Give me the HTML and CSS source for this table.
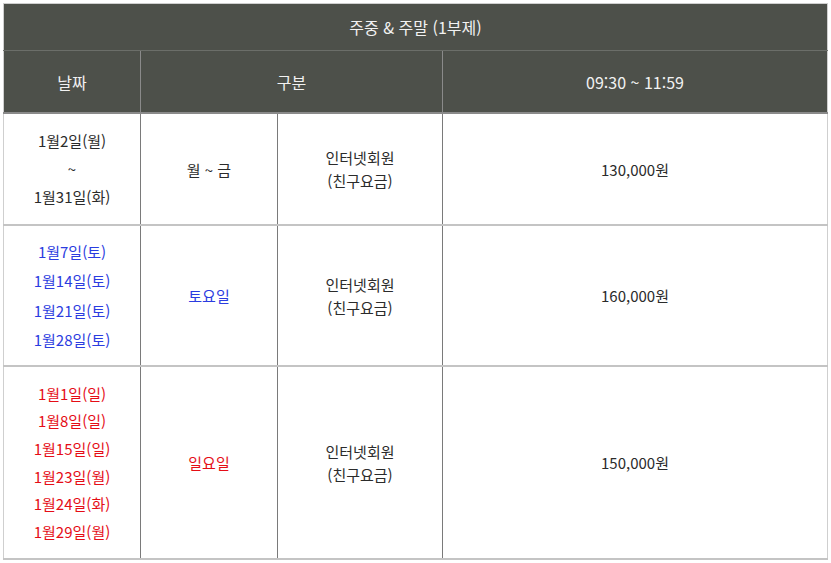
FILE: index.html
```html
<!DOCTYPE html>
<html lang="ko">
<head>
<meta charset="utf-8">
<link rel="stylesheet" href="styles.css">
</head>
<body>
<div class="wrap">
<table class="price">
  <colgroup>
    <col class="c1"><col class="c2"><col class="c3"><col class="c4">
  </colgroup>
  <thead>
    <tr class="h1"><th colspan="4">주중 &amp; 주말 (1부제)</th></tr>
    <tr class="h2"><th>날짜</th><th colspan="2">구분</th><th>09:30 ~ 11:59</th></tr>
  </thead>
  <tbody>
    <tr class="r1">
      <td class="dates">1월2일(월)<br>~<br>1월31일(화)</td>
      <td>월 ~ 금</td>
      <td class="member">인터넷회원<br>(친구요금)</td>
      <td>130,000원</td>
    </tr>
    <tr class="r2 blue">
      <td class="dates">1월7일(토)<br>1월14일(토)<br>1월21일(토)<br>1월28일(토)</td>
      <td>토요일</td>
      <td class="member">인터넷회원<br>(친구요금)</td>
      <td>160,000원</td>
    </tr>
    <tr class="r3 red">
      <td class="dates">1월1일(일)<br>1월8일(일)<br>1월15일(일)<br>1월23일(월)<br>1월24일(화)<br>1월29일(월)</td>
      <td>일요일</td>
      <td class="member">인터넷회원<br>(친구요금)</td>
      <td>150,000원</td>
    </tr>
  </tbody>
</table>
</div>
</body>
</html>
```

FILE: styles.css
```css
html, body {
  margin: 0;
  padding: 0;
  background: #fff;
}
.wrap {
  padding: 3px 0 0 3px;
}
.price {
  width: 825px;
  border-collapse: collapse;
  table-layout: fixed;
  font-family: "Noto Sans CJK KR", "Noto Sans", sans-serif;
  font-size: 15px;
  color: #2b2b2b;
  border: 1px solid #cfcfcf;
}
.c1 { width: 137px; }
.c2 { width: 137px; }
.c3 { width: 165px; }
.price th {
  background: #4d504a;
  color: #f2f2f2;
  font-weight: normal;
  font-size: 16px;
  text-align: center;
  padding: 0;
}
.h1 th {
  height: 46px;
  border-bottom: 1px solid #6b6e69;
}
.h2 th {
  height: 61px;
  border-bottom: 2px solid #8a8a8a;
  border-left: 1px solid #8a8a8a;
}
.h2 th:first-child { border-left: none; }
.price td {
  text-align: center;
  vertical-align: middle;
  padding: 0;
  border-left: 1px solid #7a7a7a;
  border-bottom: 2px solid #c4c4c4;
}
.price td:first-child { border-left: none; }
.member { line-height: 23px; }
.r1 td { height: 110px; }
.r1 .dates { line-height: 28px; }
.r2 td { height: 139px; }
.r2 .dates { line-height: 29.3px; }
.r3 td { height: 191px; }
.r3 .dates { line-height: 27.6px; }
.blue td:nth-child(1), .blue td:nth-child(2) { color: #2b3ce0; }
.red td:nth-child(1), .red td:nth-child(2) { color: #e50d16; }
```
